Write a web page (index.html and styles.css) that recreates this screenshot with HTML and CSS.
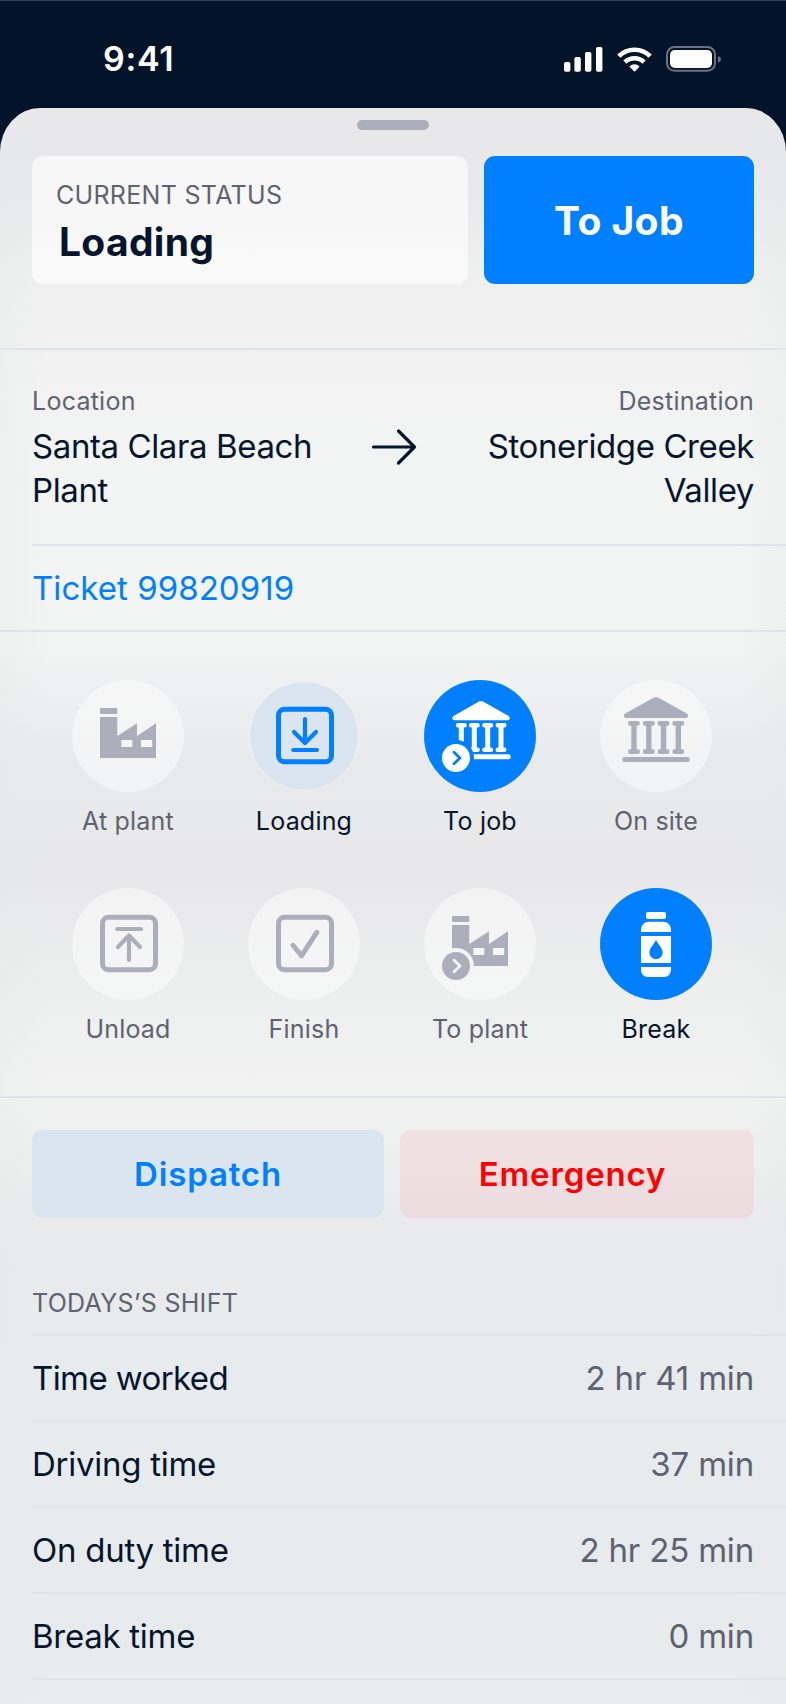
FILE: index.html
```
<!DOCTYPE html>
<html lang="en">
<head>
  <meta charset="UTF-8">
  <title>Driver status</title>
  <link rel="stylesheet" href="styles.css">
</head>
<body>

<div class="phone">
  <header class="statusbar">
    <span class="clock">9:41</span>
    <svg class="signals" width="160" height="28" viewBox="0 0 160 28">
      <g fill="#fff">
        <rect x="2" y="17" width="6.4" height="9.7" rx="1.8"/>
        <rect x="12.4" y="12" width="6.4" height="14.7" rx="1.8"/>
        <rect x="23" y="7" width="6.4" height="19.7" rx="1.8"/>
        <rect x="34" y="2" width="6.4" height="24.7" rx="1.8"/>
        <path d="M72.5 26.8 L67.3 21.6 Q72.5 16.8 77.7 21.6 Z"/>
      </g>
      <g fill="none" stroke="#fff" stroke-width="4.6">
        <path d="M62.9 17.2 A13.8 13.8 0 0 1 82.1 17.2"/>
        <path d="M56.8 11.1 A22.4 22.4 0 0 1 88.2 11.1"/>
      </g>
      <rect x="105" y="2" width="48" height="23.8" rx="7.5" fill="none" stroke="#6c7280" stroke-width="2"/>
      <rect x="108" y="5" width="42" height="18" rx="4.8" fill="#fff"/>
      <path d="M156 11 Q159 12 159 14.3 T156 18 Z" fill="#6c7280"/>
    </svg>
  </header>

  <main class="sheet">
    <div class="handle"></div>

    <section class="current">
      <div class="current-card">
        <div class="caption">CURRENT STATUS</div>
        <div class="current-name">Loading</div>
      </div>
      <button class="next">To Job</button>
    </section>

    <section class="route">
      <div class="place">
        <div class="place-label">Location</div>
        <div class="place-name">Santa Clara Beach Plant</div>
      </div>
      <svg class="arrow" width="48" height="40" viewBox="0 0 48 40">
        <path d="M4.5 20 H45.5 M29.5 4 L45.5 20 L29.5 36" fill="none" stroke="#04152d" stroke-width="3.2" stroke-linecap="round" stroke-linejoin="round"/>
      </svg>
      <div class="place place-end">
        <div class="place-label">Destination</div>
        <div class="place-name">Stoneridge Creek Valley</div>
      </div>
    </section>

    <a class="ticket">Ticket 99820919</a>

    <section class="statuses">
      <div class="status">
        <svg class="circle" viewBox="0 0 112 112">
          <g id="plant" fill="currentColor">
            <rect x="28" y="28" width="17.3" height="6" rx="1"/>
            <path fill-rule="evenodd" d="M28 37 H45.3 V56 L65 43.3 V56 L84 43.3 V78 H28 Z M49.3 60 V67 H60.3 V60 Z M69 60 V67 H80.2 V60 Z"/>
          </g>
        </svg>
        <span>At plant</span>
      </div>

      <div class="status current-status">
        <svg class="circle" viewBox="0 0 112 112">
          <g fill="none" stroke="currentColor" stroke-linecap="round" stroke-linejoin="round">
            <rect x="30.5" y="29.3" width="53" height="52.4" rx="6" stroke-width="5"/>
            <path d="M57 39 V63 M46 52 L57 63 L68 52 M45.3 70 H69" stroke-width="4.2"/>
          </g>
        </svg>
        <span>Loading</span>
      </div>

      <div class="status active">
        <svg class="circle" viewBox="0 0 112 112">
          <mask id="badge-gap">
            <rect width="112" height="112" fill="#fff"/>
            <circle cx="32" cy="78" r="18" fill="#000"/>
          </mask>
          <g mask="url(#badge-gap)">
            <g fill="currentColor">
              <path d="M55 21.5 Q57 20.4 59 21.5 L84.6 36 Q86.2 37 85.7 38.8 Q85.2 40.3 83.5 40.3 H30.6 Q28.9 40.3 28.5 38.8 Q28 37 29.6 36 Z"/>
              <path d="M40 74.3 H84.2 a2.5 2.5 0 0 1 0 5 H40 Z"/>
            </g>
            <g fill="none" stroke="currentColor">
              <path d="M37.3 46 V70 M50.3 46 V70 M63.7 46 V70 M77 46 V70" stroke-width="5"/>
              <path d="M34.1 45.2 h6.4 M47.1 45.2 h6.4 M60.5 45.2 h6.4 M73.8 45.2 h6.4 M34.1 69.7 h6.4 M47.1 69.7 h6.4 M60.5 69.7 h6.4 M73.8 69.7 h6.4" stroke-width="4.6" stroke-linecap="round"/>
            </g>
          </g>
          <circle cx="32" cy="78" r="14" fill="currentColor"/>
          <path d="M30 72.3 L36 78 L30 83.7" fill="none" stroke="#007fff" stroke-width="2.8" stroke-linecap="round" stroke-linejoin="round"/>
        </svg>
        <span>To job</span>
      </div>

      <div class="status">
        <svg class="circle" viewBox="0 0 112 112">
          <g fill="currentColor">
            <path d="M54 17.4 Q56 16.4 58 17.4 L86.8 33.5 Q88.4 34.5 88 36.4 Q87.5 38 85.6 38 H26.4 Q24.5 38 24 36.4 Q23.6 34.5 25.2 33.5 Z"/>
            <rect x="22.3" y="77" width="67.4" height="5" rx="2.5"/>
          </g>
          <g fill="none" stroke="currentColor">
            <path d="M34 43 V72 M48.8 43 V72 M63.5 43 V72 M78.3 43 V72" stroke-width="5.4"/>
            <path d="M30.4 43.4 h7.2 M45.2 43.4 h7.2 M59.9 43.4 h7.2 M74.7 43.4 h7.2 M30.4 71.7 h7.2 M45.2 71.7 h7.2 M59.9 71.7 h7.2 M74.7 71.7 h7.2" stroke-width="4.8" stroke-linecap="round"/>
          </g>
        </svg>
        <span>On site</span>
      </div>

      <div class="status">
        <svg class="circle" viewBox="0 0 112 112">
          <g fill="none" stroke="currentColor" stroke-linecap="round" stroke-linejoin="round">
            <rect x="30.5" y="29.3" width="53" height="52.4" rx="6" stroke-width="5"/>
            <path d="M57 72 V47.5 M46 59 L57 47.5 L68 59 M45.3 41 H69" stroke-width="4.2"/>
          </g>
        </svg>
        <span>Unload</span>
      </div>

      <div class="status">
        <svg class="circle" viewBox="0 0 112 112">
          <g fill="none" stroke="currentColor" stroke-width="5" stroke-linecap="round" stroke-linejoin="round">
            <rect x="30.5" y="29.3" width="53" height="52.4" rx="6"/>
            <path d="M45 57.3 L53.5 67.8 L68.8 44.3"/>
          </g>
        </svg>
        <span>Finish</span>
      </div>

      <div class="status">
        <svg class="circle" viewBox="0 0 112 112">
          <mask id="chevron-gap">
            <rect width="112" height="112" fill="#fff"/>
            <path d="M30 72.3 L36 78 L30 83.7" fill="none" stroke="#000" stroke-width="2.8" stroke-linecap="round" stroke-linejoin="round"/>
          </mask>
          <g mask="url(#badge-gap)"><use href="#plant"/></g>
          <circle cx="32" cy="78" r="14" fill="currentColor" mask="url(#chevron-gap)"/>
        </svg>
        <span>To plant</span>
      </div>

      <div class="status active">
        <svg class="circle" viewBox="0 0 112 112">
          <g fill="currentColor">
            <rect x="46" y="24" width="20" height="7" rx="2"/>
            <path d="M41 44 V42 C41 37 44.5 33.7 49 33.7 H63 C67.5 33.7 71 37 71 42 V44 Z"/>
            <path fill-rule="evenodd" d="M41 48 H71 V75 H41 Z M56 52 C54 56 49.3 60.5 49.3 64.6 A6.7 6.7 0 0 0 62.7 64.6 C62.7 60.5 58 56 56 52 Z"/>
            <path d="M41 79 H71 V81 C71 86 68 89 64 89 H48 C44 89 41 86 41 81 Z"/>
          </g>
        </svg>
        <span>Break</span>
      </div>
    </section>

    <section class="actions">
      <button class="dispatch">Dispatch</button>
      <button class="emergency">Emergency</button>
    </section>

    <section class="shift">
      <div class="caption shift-title">TODAYS’S SHIFT</div>
      <div class="row"><span class="worked">Time worked</span><span class="value">2 hr 41 min</span></div>
      <div class="row"><span>Driving time</span><span class="value">37 min</span></div>
      <div class="row"><span>On duty time</span><span class="value">2 hr 25 min</span></div>
      <div class="row"><span>Break time</span><span class="value">0 min</span></div>
    </section>
  </main>
</div>

</body>
</html>
```
FILE: styles.css
```
* {
  box-sizing: border-box;
}

body {
  margin: 0;
  background-color: #031329;
  color: #04152d;
  font-family: Inter, "Liberation Sans", sans-serif;
}

button {
  border: none;
  font-family: inherit;
  padding: 0;
}

.phone {
  height: 1704px;
  overflow: hidden;
  border-top: 1px solid #2c3f50;
}

.statusbar {
  height: 107px;
  padding: 0 64px 0 103px;
  display: flex;
  justify-content: space-between;
}

.clock {
  margin-top: 36px;
  color: white;
  font-size: 34px;
  font-weight: 600;
  line-height: 44px;
  letter-spacing: 0.7px;
}

.signals {
  margin-top: 44px;
}

.sheet {
  height: 1596px;
  padding-top: 12px;
  border-radius: 40px 40px 0 0 / 44px 44px 0 0;
  background:
    linear-gradient(90deg, rgba(226,233,230,.25), rgba(226,233,230,0) 6%, rgba(226,233,230,0) 94%, rgba(226,233,230,.25)),
    linear-gradient(#e8e8ea 0, #e9e9eb 90px, #f0f1f0 190px, #f2f2f2 260px, #f3f4f4 370px, #f2f3f3 540px, #e9eaec 650px, #e8e8ea 770px, #eeefef 900px, #f2f2f2 980px, #eeefef 1040px, #e9eaec 1130px, #e8ebee 1270px, #e8ebee 1540px, #ebecee 1596px);
}

.handle {
  width: 72px;
  height: 10px;
  margin: 0 auto;
  border-radius: 5px;
  background-color: #aaafbb;
}

.current {
  display: flex;
  gap: 16px;
  padding: 26px 32px 64px;
  border-bottom: 2px solid #dfe4ea;
}

.current-card {
  width: 436px;
  height: 128px;
  padding: 23px 24px;
  border-radius: 11px;
  background-color: rgba(255,255,255,.62);
}

.caption {
  color: #5d6370;
  font-size: 25px;
  line-height: 32px;
  letter-spacing: 0.3px;
}

.current-name {
  padding-left: 3px;
  font-size: 39px;
  font-weight: 700;
  line-height: 48px;
  letter-spacing: 0.3px;
  margin-top: 7px;
}

.next {
  flex: 1;
  border-radius: 11px;
  background-color: #007fff;
  color: white;
  font-size: 39px;
  font-weight: 700;
  letter-spacing: 0.4px;
}

.route {
  display: flex;
  height: 196px;
  margin-left: 32px;
  padding: 35px 32px 0 0;
  border-bottom: 2px solid #dfe4ea;
}

.place {
  width: 300px;
}

.place-end {
  margin-left: auto;
  text-align: right;
}

.place-label {
  color: #5d6370;
  font-size: 25px;
  line-height: 32px;
  letter-spacing: 0.25px;
}

.place-name {
  margin-top: 7px;
  font-size: 33px;
  line-height: 44px;
  letter-spacing: -0.4px;
}

.arrow {
  margin: 42px 0 0 37px;
}

.ticket {
  display: block;
  height: 86px;
  padding-left: 32px;
  border-bottom: 2px solid #dfe4ea;
  color: #007fff;
  font-size: 33px;
  line-height: 84px;
  letter-spacing: 0.05px;
}

.statuses {
  display: grid;
  grid-template-columns: repeat(4, 176px);
  grid-auto-rows: 208px;
  height: 466px;
  padding: 48px 0 0 40px;
  border-bottom: 2px solid #dfe4ea;
}

.status {
  display: flex;
  flex-direction: column;
  align-items: center;
  color: #5d6370;
  font-size: 25px;
  line-height: 32px;
  letter-spacing: 0.2px;
}

.circle {
  width: 112px;
  height: 112px;
  margin-bottom: 13px;
  border-radius: 50%;
  background-color: rgba(255,255,255,.46);
  color: #aaafbb;
}

.current-status, .active {
  color: #04152d;
}

.current-status .circle {
  background: radial-gradient(circle, #dae5f0 53.5px, rgba(255,255,255,.35) 54.5px, rgba(255,255,255,0) 55.5px);
  color: #007fff;
}

.active .circle {
  background-color: #007fff;
  color: white;
}

.actions {
  display: grid;
  grid-template-columns: 352px 354px;
  gap: 16px;
  padding: 32px 32px 0;
}

.actions button {
  height: 88px;
  border-radius: 11px;
  font-size: 33px;
  font-weight: 600;
  letter-spacing: 0.85px;
}

.actions .dispatch {
  background-color: #dbe5ef;
  color: #007fff;
}

.actions .emergency {
  padding-right: 9px;
  background: linear-gradient(#f1e1e1, #ecdce0);
  color: #ff0000;
}

.shift {
  margin: 69px 0 0 32px;
}

.shift-title {
  padding-bottom: 15px;
  border-bottom: 2px solid #dfe4ea;
}

.row {
  display: flex;
  justify-content: space-between;
  height: 86px;
  padding-right: 32px;
  border-bottom: 2px solid #dfe4ea;
  font-size: 33px;
  line-height: 84px;
  letter-spacing: -0.27px;
}

.worked {
  letter-spacing: -0.6px;
}

.value {
  color: #5d6370;
  letter-spacing: -0.18px;
}
```
